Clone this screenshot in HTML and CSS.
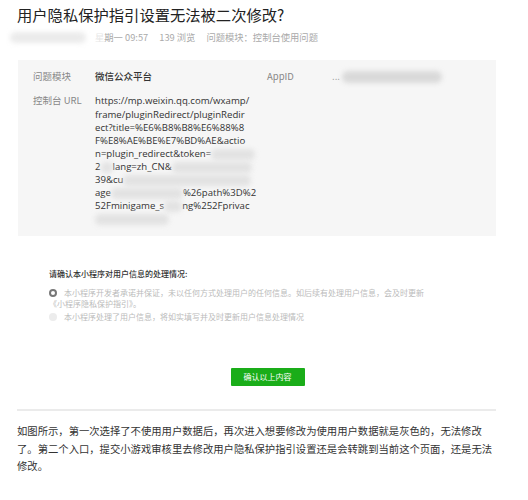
FILE: index.html
```html
<!DOCTYPE html>
<html lang="zh-CN">
<head>
<meta charset="utf-8">
<title>用户隐私保护指引设置无法被二次修改?</title>
<link rel="stylesheet" href="styles.css">
</head>
<body>
<div class="page">
  <h1 class="title">用户隐私保护指引设置无法被二次修改?</h1>
  <div class="meta">
    <span class="smudge smudge-user"></span>
    <span class="time"><span class="faint">星</span>期一 09:57</span>
    <span>139 浏览</span>
    <span>问题模块：控制台使用问题</span>
  </div>

  <div class="shot">
    <div class="info">
      <span class="label">问题模块</span>
      <span class="value strong">微信公众平台</span>
      <span class="label">AppID</span>
      <span class="appid">...<span class="smudge smudge-appid"></span></span>

      <span class="label">控制台 URL</span>
      <div class="url">
        <div>https://mp.weixin.qq.com/wxamp/</div>
        <div>frame/pluginRedirect/pluginRedir</div>
        <div>ect?title=%E6%B8%B8%E6%88%8</div>
        <div>F%E8%AE%BE%E7%BD%AE&amp;actio</div>
        <div>n=plugin_redirect&amp;token=<span class="smudge w44"></span></div>
        <div>2<span class="smudge w12"></span>lang=zh_CN&amp;<span class="smudge w80"></span></div>
        <div>39&amp;cu<span class="smudge w128"></span></div>
        <div>age<span class="smudge w70"></span>%26path%3D%2</div>
        <div>52Fminigame_s<span class="smudge w14"></span>ng%252Fprivac</div>
        <div><span class="smudge w74"></span></div>
      </div>
    </div>

    <div class="privacy">
      <div class="privacy-head">请确认本小程序对用户信息的处理情况:</div>
      <div class="option">
        <span class="radio radio-ring"></span>
        <span>本小程序开发者承诺并保证，未以任何方式处理用户的任何信息。如后续有处理用户信息，会及时更新</span>
      </div>
      <div class="option-cont">《小程序隐私保护指引》。</div>
      <div class="option option-last">
        <span class="radio radio-off"></span>
        <span>本小程序处理了用户信息，将如实填写并及时更新用户信息处理情况</span>
      </div>
    </div>

    <div class="actions">
      <button class="confirm" type="button">确认以上内容</button>
    </div>
  </div>

  <p class="body">如图所示，第一次选择了不使用用户数据后，再次进入想要修改为使用用户数据就是灰色的，无法修改了。第二个入口，提交小游戏审核里去修改用户隐私保护指引设置还是会转跳到当前这个页面，还是无法修改。</p>
</div>
</body>
</html>
```

FILE: styles.css
```css
html, body {
  margin: 0;
  padding: 0;
  background: #fff;
}

body {
  font-family: "Noto Sans CJK SC", "Noto Sans", sans-serif;
  color: #333;
}

.page {
  width: 479px;
  padding: 3px 0 0 17px;
}

.title {
  margin: 0;
  font-size: 15.3px;
  line-height: 22px;
  font-weight: 400;
  color: #222;
}

.meta {
  display: flex;
  align-items: center;
  gap: 11px;
  margin-top: 3px;
  margin-left: -7px;
  height: 18px;
  font-size: 9.3px;
  color: #aaa;
}

.meta .time {
  margin-left: -2px;
}

.faint {
  color: #e6e6e6;
}

.smudge {
  display: inline-block;
  height: 11px;
  vertical-align: middle;
  background: #e2e2e2;
  border-radius: 6px;
  filter: blur(2.5px);
}

.smudge-user {
  width: 76px;
  height: 11px;
  background: #ebebeb;
}

/* embedded screenshot */
.shot {
  margin-top: 14px;
  border-bottom: 2px solid #ebebeb;
  padding-bottom: 23px;
}

.info {
  display: grid;
  grid-template-columns: 62px 172px 53px 1fr;
  row-gap: 11px;
  align-items: start;
  margin-left: 1px;
  padding: 10px 0 11px 15px;
  background: #f6f6f6;
  font-size: 9.5px;
  line-height: 13.1px;
}

.label {
  color: #888;
}

.value.strong {
  color: #333;
  font-weight: 500;
}

.appid {
  color: #999;
  padding-left: 12px;
}

.smudge-appid {
  width: 100px;
  height: 12px;
  margin-left: 2px;
  background: #d9d9d9;
}

.url {
  grid-column: 2 / 5;
  font-family: "Open Sans", "Noto Sans", sans-serif;
  font-size: 9.6px;
  color: #333;
  white-space: nowrap;
}

.w12 { width: 12px; }
.w14 { width: 18px; }
.w44 { width: 44px; }
.w70 { width: 72px; }
.w74 { width: 74px; }
.w80 { width: 80px; }
.w128 { width: 128px; }

/* privacy choice */
.privacy {
  margin-top: 32px;
  padding-left: 32px;
  font-size: 8px;
  line-height: 11.5px;
}

.privacy-head {
  color: #333;
  font-weight: 500;
}

.option {
  display: flex;
  align-items: center;
  gap: 7px;
  margin-top: 7px;
  color: #bbb;
}

.option-cont {
  color: #bbb;
}

.option-last {
  margin-top: 1px;
}

.radio {
  flex: none;
  width: 8px;
  height: 8px;
  border-radius: 50%;
  box-sizing: border-box;
}

.radio-ring {
  border: 2px solid #777;
}

.radio-off {
  background: #ececec;
}

.actions {
  display: flex;
  justify-content: center;
  margin-top: 46px;
}

.confirm {
  margin-left: 22px;
  width: 74px;
  height: 18px;
  padding: 0;
  border: 0;
  border-radius: 1px;
  background: #1aad19;
  color: #fff;
  font-family: "Noto Sans CJK SC", sans-serif;
  font-size: 8px;
  line-height: 18px;
}

.body {
  margin: 11px 0 0;
  font-size: 10.33px;
  line-height: 17.5px;
  color: #333;
}
```
